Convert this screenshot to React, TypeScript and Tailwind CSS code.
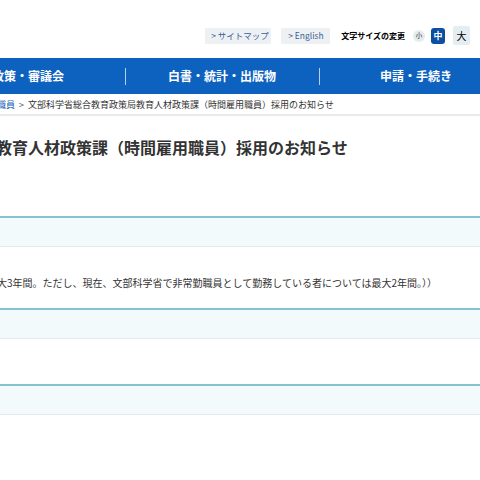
import React from 'react';

const jp = "font-['Noto_Sans_CJK_JP','Noto_Sans',sans-serif]";

const navItems = ['政策・審議会', '白書・統計・出版物', '申請・手続き'];

const App = () => {
  return (
    <div className={`w-[480px] h-[480px] overflow-hidden bg-white text-[#333] ${jp}`}>
      {/* utility links */}
      <div className="h-[58px] flex items-start justify-end pr-[10px] pt-[26px]">
        <div className="flex items-center h-[19px]">
          <a className="w-[66px] h-[16px] bg-[#eef1f4] text-[#3d5f94] text-[8.5px] flex items-center pl-[6px] leading-none">
            &gt; サイトマップ
          </a>
          <a className="ml-[10px] w-[49px] h-[16px] bg-[#eef1f4] text-[#3d5f94] text-[8.5px] flex items-center pl-[7px] leading-none">
            &gt; English
          </a>
          <span className="ml-[11px] text-[8px] font-bold text-black leading-none whitespace-nowrap">文字サイズの変更</span>
          <span className="ml-[8px] w-[12px] h-[12px] rounded-full bg-[#e4ecef] text-[6.5px] flex items-center justify-center leading-none">小</span>
          <span className="ml-[6px] w-[14px] h-[16px] rounded-[3px] bg-[#0b4ea2] text-white font-bold text-[9px] flex items-center justify-center leading-none">中</span>
          <span className="ml-[8px] w-[17px] h-[19px] rounded-[2px] bg-[#e4eef2] text-black text-[10px] flex items-center justify-center leading-none">大</span>
        </div>
      </div>

      {/* global nav */}
      <nav className="h-[36px] bg-[#0e62bf] flex items-center ml-[-69px] whitespace-nowrap">
        {navItems.map((item, i) => (
          <div key={item} className="w-[194px] shrink-0 flex items-center relative h-full">
            {i > 0 && <span className="absolute left-0 top-[10px] h-[17px] w-px bg-white/70" />}
            <span className="w-full text-center text-white font-bold text-[12px]">{item}</span>
          </div>
        ))}
      </nav>

      {/* breadcrumb */}
      <div className="h-[22px] pt-[2px] border-b-2 border-[#e9eaeb] flex items-center text-[9px] whitespace-nowrap ml-[-3px]">
        <a className="text-[#1d5fb5]">職員</a>
        <span className="mx-[4px] text-[#555]">&gt;</span>
        <span className="text-[#333]">文部科学省総合教育政策局教育人材政策課（時間雇用職員）採用のお知らせ</span>
      </div>

      {/* title */}
      <h1 className="mt-[19px] ml-[-4px] text-[16px] font-bold leading-[24px] whitespace-nowrap text-[#333]">
        教育人材政策課（時間雇用職員）採用のお知らせ
      </h1>

      {/* table */}
      <div className="mt-[57px]">
        <div className="border-t-2 border-[#86c3d1] bg-[#f2fafc] h-[31px] border-b-[1.5px] border-b-[#e6e9eb]" />
        <div className="h-[61px] flex items-center pt-[9px] ml-[-3px] text-[10px] whitespace-nowrap text-[#333]">
          大3年間。ただし、現在、文部科学省で非常勤職員として勤務している者については最大2年間。））
        </div>
        <div className="border-t-2 border-[#86c3d1] bg-[#f2fafc] h-[31px] border-b-[1.5px] border-b-[#e6e9eb]" />
        <div className="h-[45px]" />
        <div className="border-t-2 border-[#86c3d1] bg-[#f2fafc] h-[31px] border-b-[1.5px] border-b-[#e6e9eb]" />
      </div>
    </div>
  );
};

export default App;
